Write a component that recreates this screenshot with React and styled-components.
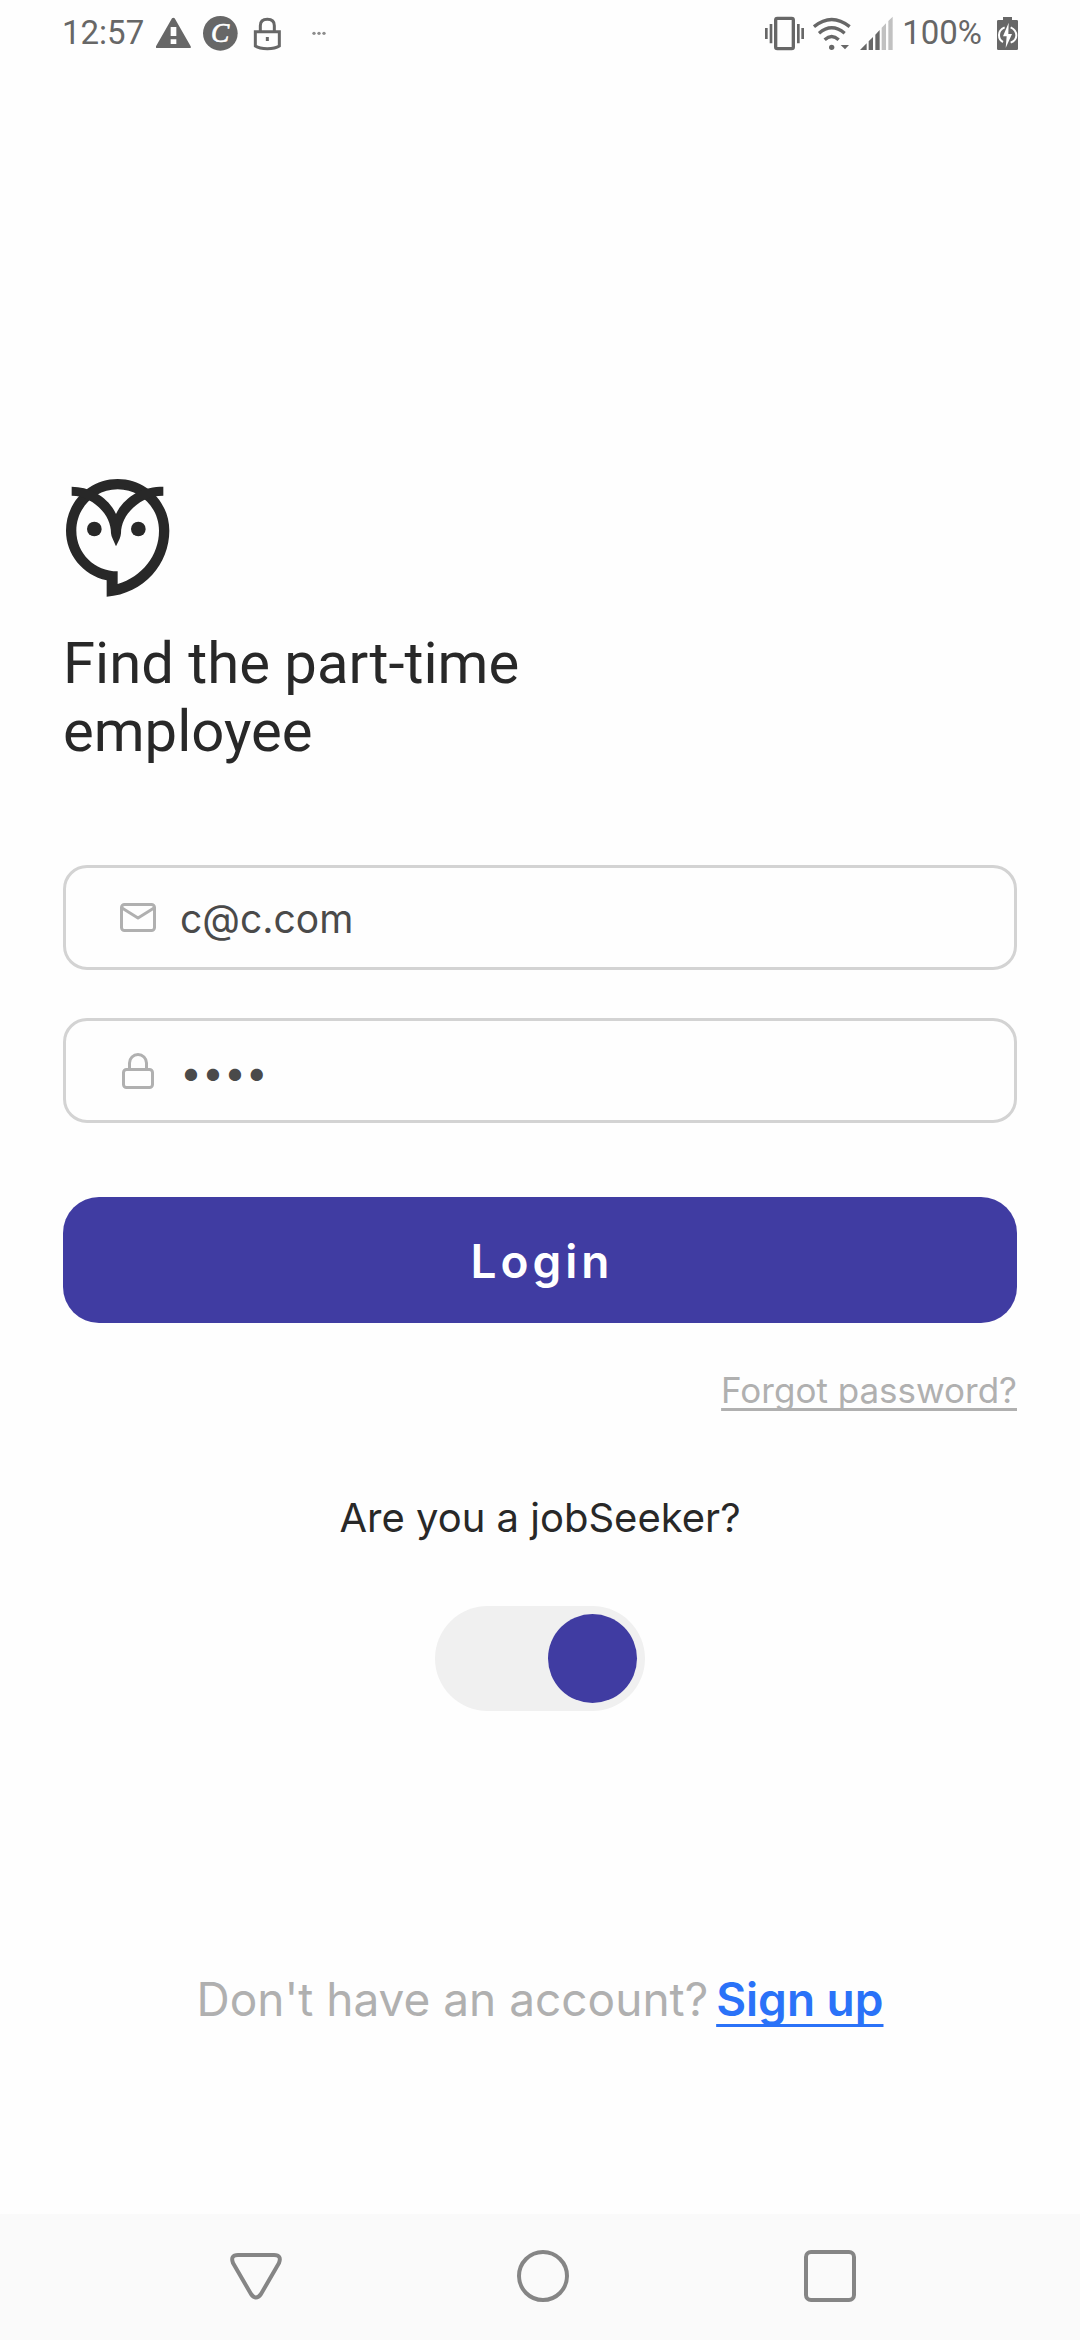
import React, { useState } from "react";
import styled, { createGlobalStyle } from "styled-components";

const ink = "#282828";
const muted = "#b0b0b0";
const indigo = "#403ca2";
const system = "#676767";

const GlobalStyle = createGlobalStyle`
  *, *::before, *::after { box-sizing: border-box; }
  body {
    margin: 0;
    background: #fefefe;
    color: ${ink};
    font-family: Inter, "Liberation Sans", sans-serif;
  }
`;

const Screen = styled.div`
  display: flex;
  flex-direction: column;
  min-height: 100vh;
`;

const StatusBar = styled.header`
  display: flex;
  align-items: center;
  justify-content: space-between;
  height: 66px;
  padding: 0 62px;
  color: ${system};
  font-family: Roboto, sans-serif;
  font-size: 33px;
  line-height: 40px;
`;

const StatusGroup = styled.div`
  display: flex;
  align-items: center;
  gap: ${({ $gap }) => $gap}px;
`;

const BatteryLevel = styled.span`
  margin-right: 6px;
`;

const Icon = styled.svg`
  display: block;
  flex: none;
  width: ${({ $w }) => $w}px;
  height: ${({ $h }) => $h}px;
`;

const Main = styled.main`
  display: flex;
  flex: 1;
  flex-direction: column;
  padding: 413px 63px 187px;
`;

const Title = styled.h1`
  max-width: 560px;
  margin: 32px 0 0;
  font-family: Roboto, sans-serif;
  font-size: 58px;
  font-weight: 400;
  line-height: 68px;
`;

const Form = styled.form`
  display: flex;
  flex-direction: column;
  margin-top: 100px;
`;

const Field = styled.label`
  display: flex;
  align-items: center;
  gap: 24px;
  height: 105px;
  margin-bottom: 48px;
  padding: 0 54px;
  border: 3px solid #d3d3d3;
  border-radius: 24px;
  color: ${muted};
`;

const TextInput = styled.input`
  flex: 1;
  min-width: 0;
  padding: 2px 0 0;
  border: 0;
  outline: 0;
  background: transparent;
  color: #4a4a4a;
  font: 400 39px/48px Inter, sans-serif;
`;

const LoginButton = styled.button`
  height: 126px;
  margin-top: 26px;
  padding: 2px 0 0 4px;
  border: 0;
  border-radius: 36px;
  background: ${indigo};
  color: #fff;
  font: 600 46px/56px Inter, sans-serif;
  letter-spacing: 4px;
`;

const TextLink = styled.a`
  color: ${({ $color }) => $color};
  font-weight: ${({ $weight }) => $weight};
  text-decoration: underline;
  text-decoration-thickness: 3px;
  text-decoration-skip-ink: none;
  text-underline-offset: ${({ $offset }) => $offset}px;
`;

const ForgotRow = styled.p`
  margin: 45px 0 0;
  font-size: 35px;
  line-height: 44px;
  text-align: right;
`;

const Role = styled.div`
  display: flex;
  flex-direction: column;
  align-items: center;
  gap: 64px;
  margin-top: 82px;
`;

const RoleLabel = styled.label`
  font-size: 40px;
  line-height: 48px;
`;

const Toggle = styled.input`
  display: flex;
  align-items: center;
  justify-content: ${({ checked }) => (checked ? "flex-end" : "flex-start")};
  width: 210px;
  height: 105px;
  margin: 0;
  padding: 8px;
  border-radius: 53px;
  background: #f0f0f0;
  appearance: none;

  &::before {
    content: "";
    width: 89px;
    height: 89px;
    border-radius: 50%;
    background: ${indigo};
  }
`;

const SignUpRow = styled.p`
  display: flex;
  justify-content: center;
  gap: 8px;
  margin: auto 0 0;
  color: ${muted};
  font-size: 46px;
  line-height: 56px;
`;

const NavBar = styled.nav`
  display: flex;
  align-items: center;
  justify-content: space-between;
  height: 126px;
  padding: 0 223px 2px 229px;
  background: #fafafa;
`;

const NavButton = styled.button`
  padding: 0;
  border: 0;
  background: none;
  color: #858585;
`;

const WarningIcon = () => (
  <Icon $w={35} $h={35} viewBox="348 45 105 105" fill="currentColor" aria-hidden="true">
    <path fillRule="evenodd" d="M396 52q4-4 8 0L452 136q2 5-3 5H351q-5 0-3-5ZM392 78v27h17V78Zm0 37v14h17v-14Z" />
  </Icon>
);

const CoinIcon = () => (
  <Icon $w={35} $h={35} viewBox="0 0 105 105" aria-hidden="true">
    <circle cx="52" cy="52" r="52" fill="currentColor" />
    <text x="51" y="78" fill="#fff" textAnchor="middle" fontFamily="Liberation Serif, serif" fontStyle="italic" fontWeight="400" fontSize="82" stroke="#fff" strokeWidth="2">C</text>
  </Icon>
);

const SecureIcon = () => (
  <Icon $w={35} $h={35} viewBox="630 45 105 105" fill="none" stroke="currentColor" strokeWidth="9" aria-hidden="true">
    <path d="M661 91V74q0-19 21-19t21 19v17M646 92h72v43q-12 8-36 8t-36-8Z" />
    <path d="M682 108v12" />
  </Icon>
);

const MoreIcon = () => (
  <Icon $w={35} $h={35} viewBox="771 45 105 105" fill="currentColor" opacity=".75" aria-hidden="true">
    <circle cx="822" cy="97" r="5" />
    <circle cx="837" cy="97" r="5" />
    <circle cx="852" cy="97" r="5" />
  </Icon>
);

const VibrateIcon = () => (
  <Icon $w={39} $h={35} viewBox="78 45 117 105" fill="none" stroke="currentColor" aria-hidden="true">
    <rect x="110" y="52" width="53" height="91" rx="5" strokeWidth="10" />
    <path strokeWidth="8" d="M82 81v33M96 69v58M178 69v58M191 81v33" />
  </Icon>
);

const WifiIcon = () => (
  <Icon $w={38} $h={35} viewBox="224 45 114 105" fill="none" stroke="currentColor" strokeWidth="10" aria-hidden="true">
    <path d="M227 77Q280 34 334 77M242 97Q280 64 319 97M259 116Q280 97 301 116" />
    <circle cx="280" cy="139" r="8" fill="currentColor" stroke="none" />
    <path d="M307 132h25l-12 13Z" fill="currentColor" stroke="none" />
  </Icon>
);

const SignalIcon = () => (
  <Icon $w={33} $h={35} viewBox="358 45 99 105" fill="currentColor" aria-hidden="true">
    <path d="M358 147 378 127V147ZM384 121 397 108V147H384ZM404 101 417 87V147H404Z" />
    <path opacity=".4" d="M423 80 436 67V147H423ZM443 60 456 47V147H443Z" />
  </Icon>
);

const BatteryIcon = () => (
  <Icon $w={21} $h={35} viewBox="765 45 63 105" aria-hidden="true">
    <path fill="currentColor" d="M783 48h27v9h14q4 0 4 4v82q0 4-4 4h-55q-4 0-4-4V61q0-4 4-4h14Z" />
    <path fill="none" stroke="#fff" strokeWidth="6" d="M788 79q-17 7-17 23 0 15 12 21M806 79q17 8 17 24 0 16-17 22" />
    <path fill="#fff" d="M800 65 783 106h11l-3 35 19-42h-11Z" />
  </Icon>
);

const OwlLogo = () => (
  <Icon $w={110} $h={118} viewBox="39 57 330 354" fill={ink} role="img" aria-label="Owl">
    <path
      fillRule="evenodd"
      d="M170 361C98 344 48 284 48 212C48 126 117 57 203 57S358 126 358 212C358 310 283 401 170 410ZM203 372C275 350 327 287 327 212C327 144 272 88 203 88S79 144 79 212C79 280 134 334 203 334Z"
    />
    <path d="M65 80C90 80 115 86 138 99C166 115 187 137 198 162C209 137 231 115 258 99C283 85 312 80 340 80V107C320 107 300 111 281 121C240 143 213 180 213 220Q212 230 209 236L198 259L188 236Q184 230 183 220C183 180 158 143 117 121C100 111 83 107 65 107Z" />
    <circle cx="133" cy="207" r="22" />
    <circle cx="265" cy="207" r="22" />
  </Icon>
);

const MailIcon = () => (
  <Icon $w={36} $h={36} viewBox="0 0 36 36" fill="none" stroke="currentColor" strokeWidth="3" strokeLinejoin="round" aria-hidden="true">
    <rect x="1.500" y="4.500" width="33" height="26" rx="3" />
    <path d="M2 8 18 18 34 8" />
  </Icon>
);

const LockIcon = () => (
  <Icon $w={36} $h={36} viewBox="0 0 36 36" fill="none" stroke="currentColor" strokeWidth="3" aria-hidden="true">
    <rect x="3.500" y="16.500" width="29" height="18" rx="3" />
    <path d="M9.500 16v-6a8.500 8.500 0 0 1 17 0v6" />
  </Icon>
);

const NavIcon = ({ children }) => (
  <Icon $w={54} $h={54} viewBox="0 0 54 54" fill="none" stroke="currentColor" strokeWidth="4" strokeLinejoin="round" aria-hidden="true">
    {children}
  </Icon>
);

export default function App() {
  const [email, setEmail] = useState("c@c.com");
  const [password, setPassword] = useState("1234");
  const [seeker, setSeeker] = useState(true);

  return (
    <Screen>
      <GlobalStyle />
      <StatusBar>
        <StatusGroup $gap={12}>
          <time>12:57</time>
          <WarningIcon />
          <CoinIcon />
          <SecureIcon />
          <MoreIcon />
        </StatusGroup>
        <StatusGroup $gap={9}>
          <VibrateIcon />
          <WifiIcon />
          <SignalIcon />
          <BatteryLevel>100%</BatteryLevel>
          <BatteryIcon />
        </StatusGroup>
      </StatusBar>

      <Main>
        <OwlLogo />
        <Title>Find the part-time employee</Title>
        <Form onSubmit={(e) => e.preventDefault()}>
          <Field>
            <MailIcon />
            <TextInput type="email" aria-label="Email" value={email} onChange={(e) => setEmail(e.target.value)} />
          </Field>
          <Field>
            <LockIcon />
            <TextInput type="password" aria-label="Password" value={password} onChange={(e) => setPassword(e.target.value)} />
          </Field>
          <LoginButton type="submit">Login</LoginButton>
        </Form>
        <ForgotRow>
          <TextLink href="#forgot" $color={muted} $weight={400} $offset={5}>Forgot password?</TextLink>
        </ForgotRow>
        <Role>
          <RoleLabel htmlFor="seeker">Are you a jobSeeker?</RoleLabel>
          <Toggle id="seeker" type="checkbox" role="switch" checked={seeker} onChange={(e) => setSeeker(e.target.checked)} />
        </Role>
        <SignUpRow>
          <span>Don't have an account?</span>
          <TextLink href="#signup" $color="#2a72f8" $weight={600} $offset={8}>Sign up</TextLink>
        </SignUpRow>
      </Main>

      <NavBar aria-label="System">
        <NavButton aria-label="Back">
          <NavIcon><path d="M9 6H45Q53 6 50 14L32 45Q27 52 22 45L4 14Q1 6 9 6Z" /></NavIcon>
        </NavButton>
        <NavButton aria-label="Home">
          <NavIcon><circle cx="27" cy="27" r="24" /></NavIcon>
        </NavButton>
        <NavButton aria-label="Recent apps">
          <NavIcon><rect x="3" y="3" width="48" height="48" rx="5" /></NavIcon>
        </NavButton>
      </NavBar>
    </Screen>
  );
}
